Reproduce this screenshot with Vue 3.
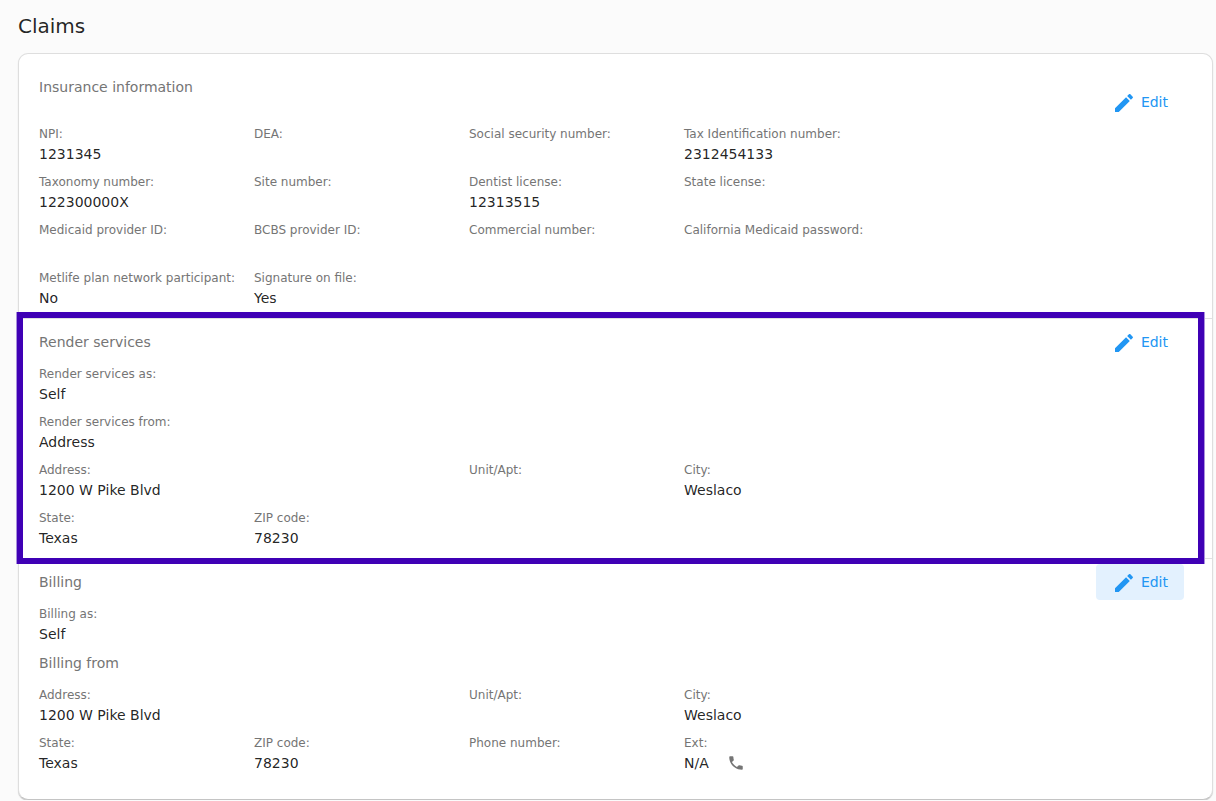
<script setup>
const sections = [
  {
    id: 'insurance',
    title: 'Insurance information',
    groups: [
      {
        fields: [
          { label: 'NPI:', value: '1231345' },
          { label: 'DEA:' },
          { label: 'Social security number:' },
          { label: 'Tax Identification number:', value: '2312454133' },
          { label: 'Taxonomy number:', value: '122300000X', start: true },
          { label: 'Site number:' },
          { label: 'Dentist license:', value: '12313515' },
          { label: 'State license:' },
          { label: 'Medicaid provider ID:', start: true },
          { label: 'BCBS provider ID:' },
          { label: 'Commercial number:' },
          { label: 'California Medicaid password:' },
          { label: 'Metlife plan network participant:', value: 'No', start: true },
          { label: 'Signature on file:', value: 'Yes' },
        ],
      },
    ],
  },
  {
    id: 'render',
    title: 'Render services',
    highlighted: true,
    groups: [
      {
        fields: [
          { label: 'Render services as:', value: 'Self' },
          { label: 'Render services from:', value: 'Address', start: true },
          { label: 'Address:', value: '1200 W Pike Blvd', start: true, wide: true },
          { label: 'Unit/Apt:' },
          { label: 'City:', value: 'Weslaco' },
          { label: 'State:', value: 'Texas', start: true },
          { label: 'ZIP code:', value: '78230' },
        ],
      },
    ],
  },
  {
    id: 'billing',
    title: 'Billing',
    active: true,
    groups: [
      { fields: [{ label: 'Billing as:', value: 'Self' }] },
      {
        title: 'Billing from',
        fields: [
          { label: 'Address:', value: '1200 W Pike Blvd', wide: true },
          { label: 'Unit/Apt:' },
          { label: 'City:', value: 'Weslaco' },
          { label: 'State:', value: 'Texas', start: true },
          { label: 'ZIP code:', value: '78230' },
          { label: 'Phone number:' },
          { label: 'Ext:', value: 'N/A', phone: true },
        ],
      },
    ],
  },
]
</script>

<template>
  <main class="page">
    <h1>Claims</h1>
    <div class="card">
      <section v-for="s in sections" :key="s.id" :class="['section', s.id]" :aria-labelledby="s.id + '-title'">
        <header class="head">
          <h2 :id="s.id + '-title'">{{ s.title }}</h2>
          <button type="button" :class="['edit', { active: s.active }]">
            <svg viewBox="0 0 24 24" aria-hidden="true">
              <path d="M3 17.25V21h3.75L17.81 9.94l-3.75-3.75L3 17.25zM20.71 7.04c.39-.39.39-1.02 0-1.41l-2.34-2.34c-.39-.39-1.02-.39-1.41 0l-1.83 1.83 3.75 3.75 1.83-1.83z" />
            </svg>
            <span>Edit</span>
          </button>
        </header>
        <div v-for="(g, i) in s.groups" :key="i" class="group">
          <h3 v-if="g.title">{{ g.title }}</h3>
          <dl class="fields">
            <div v-for="f in g.fields" :key="f.label" :class="{ start: f.start, wide: f.wide }">
              <dt>{{ f.label }}</dt>
              <dd>
                {{ f.value }}
                <svg v-if="f.phone" class="phone" viewBox="0 0 24 24" aria-hidden="true">
                  <path d="M6.62 10.79c1.44 2.83 3.76 5.14 6.59 6.59l2.2-2.2c.27-.27.67-.36 1.02-.24 1.12.37 2.33.57 3.57.57.55 0 1 .45 1 1V20c0 .55-.45 1-1 1-9.39 0-17-7.61-17-17 0-.55.45-1 1-1h3.5c.55 0 1 .45 1 1 0 1.25.2 2.45.57 3.57.11.35.03.74-.25 1.02l-2.2 2.2z" />
                </svg>
              </dd>
            </div>
          </dl>
        </div>
        <div v-if="s.highlighted" class="highlight" aria-hidden="true"></div>
      </section>
    </div>
  </main>
</template>

<style>
body {
  margin: 0;
  background: #fbfbfb;
}
</style>

<style scoped>
.page {
  padding: 13px 3px 0 18px;
  font-family: Verdana, "DejaVu Sans", sans-serif;
  font-size: 14px;
  line-height: 20px;
  color: rgba(0, 0, 0, 0.87);
}

h1,
h2,
h3,
dl,
dd {
  margin: 0;
  font-weight: 400;
}

h1 {
  margin-bottom: 14px;
  font-size: 20px;
  line-height: 26px;
}

h2,
h3 {
  font-size: 14px;
  line-height: 20px;
  color: #757575;
}

.card {
  border: 1px solid #dedede;
  border-bottom-color: #c4c4c4;
  border-radius: 10px;
  background: #fff;
  box-shadow: 0 1px 1px rgba(0, 0, 0, 0.2);
}

.section {
  position: relative;
  padding: 5px 20px 10px;
}

.section + .section {
  border-top: 1px solid #e0e0e0;
}

.insurance {
  padding-top: 30px;
}

.billing {
  padding-bottom: 26px;
}

.head {
  display: flex;
  align-items: center;
  justify-content: space-between;
  margin-bottom: 4px;
  padding-right: 8px;
}

.insurance .head {
  align-items: flex-start;
}

.insurance h2 {
  margin-top: -7px;
}

.edit {
  display: flex;
  align-items: center;
  gap: 5px;
  height: 36px;
  padding: 0 16px;
  border: 0;
  border-radius: 4px;
  background: transparent;
  color: #2196f3;
  font: inherit;
}

.edit.active {
  background: #e3f1fe;
}

.edit svg {
  width: 24px;
  height: 24px;
  margin-top: 2px;
  fill: currentColor;
}

.group + .group {
  margin-top: 9px;
}

h3 {
  margin-bottom: 12px;
}

.fields {
  display: grid;
  grid-template-columns: repeat(5, minmax(0, 1fr));
  row-gap: 8px;
  padding-right: 78px;
}

.start {
  grid-column-start: 1;
}

.wide {
  grid-column-end: span 2;
}

dt {
  font-size: 12px;
  line-height: 20px;
  white-space: nowrap;
  color: #757575;
}

dd {
  display: flex;
  align-items: center;
  gap: 18px;
  height: 20px;
}

.phone {
  width: 18px;
  height: 18px;
  fill: #757575;
}

.highlight {
  position: absolute;
  inset: -7px 8px -6px -2px;
  border: 6px solid #3f00b5;
  box-shadow: 1px 0 0 #a98fdd, -1px 0 0 #a98fdd;
  pointer-events: none;
  z-index: 1;
}
</style>
